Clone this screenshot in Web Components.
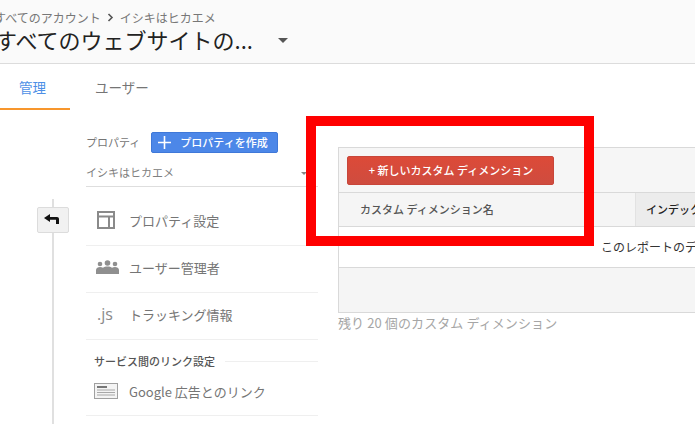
<!DOCTYPE html>
<html lang="ja"><head><meta charset="utf-8">
<style>
html,body{margin:0;padding:0;background:#fff;width:695px;height:424px;overflow:hidden;font-family:"Noto Sans CJK JP","Liberation Sans",sans-serif}
</style></head><body>
<ga-app></ga-app>
<script>
function def(name, html){
  customElements.define(name, class extends HTMLElement{
    constructor(){super();this.attachShadow({mode:'open'}).innerHTML=html;}
  });
}
const font='"Noto Sans CJK JP","Liberation Sans",sans-serif';
def('ga-header',`<style>
:host{display:block;height:63px;box-sizing:content-box;background:#fafafa;border-bottom:1px solid #dcdcdc;overflow:hidden;font-family:${font}}
.crumb{display:flex;align-items:center;gap:6px;margin:9px 0 0 -6px;height:17px;font-size:12px;line-height:17px;color:#777;white-space:nowrap}
.title{display:flex;align-items:center;margin:0 0 0 -5px;height:26px;font-size:22px;line-height:26px;color:#222;white-space:nowrap}
.caret{margin-left:25px;margin-top:2px;width:0;height:0;border:5px solid transparent;border-top:5px solid #555;border-bottom:0}
</style>
<div class="crumb"><span>すべてのアカウント</span><svg width="7" height="9" viewBox="0 0 7 9"><path d="M1.500 1l3.500 3.500L1.500 8" fill="none" stroke="#555" stroke-width="1.600"/></svg><span>イシキはヒカエメ</span></div>
<div class="title"><span>すべてのウェブサイトの...</span><i class="caret"></i></div>`);

def('ga-tabs',`<style>
:host{display:flex;height:46px;font-family:${font};font-size:13.5px}
.t{box-sizing:border-box;height:46px;line-height:46px;white-space:nowrap;color:#757575}
.a{width:70px;padding-left:19px;color:#4d8fe6;border-bottom:2px solid #f7962d}
.b{margin-left:25px}
</style><div class="t a">管理</div><div class="t b">ユーザー</div>`);

def('ga-rail',`<style>
:host{display:flex;justify-content:center;width:32px;flex:none;margin-left:37px;height:100%}
.line{width:2px;height:100%;background:#e0e0e0;display:flex;justify-content:center;box-sizing:border-box}
.btn{flex:none;box-sizing:border-box;width:32px;height:26px;margin-top:8px;background:#f1f1f1;border:1px solid #dcdcdc;border-radius:2px;display:flex;align-items:center;justify-content:center}
svg{display:block;margin:-2px 0 0 -3px}
</style><div class="line"><div class="btn"><svg width="15" height="10" viewBox="0 0 15 10"><path d="M6 0 0 4l6 4V5.700h6V10h3V5c0-1.200-.8-2-2-2H6z" fill="#111"/></svg></div></div>`);

def('ga-nav-item',`<style>
:host{display:flex;align-items:center;height:42px;padding-bottom:4px;box-sizing:content-box;border-bottom:1px solid #efefef;font-size:13px;color:#757575;white-space:nowrap}
.i{width:43px;flex:none;display:flex;align-items:center;padding-left:9px;box-sizing:border-box}
</style><div class="i"><slot name="icon"></slot></div><slot></slot>`);

def('ga-nav',`<style>
:host{display:block;width:232px;flex:none;margin-left:17px;font-family:${font}}
.top{display:flex;align-items:center;height:24px;margin-top:-1px;font-size:11px;color:#757575;white-space:nowrap}
.create{display:flex;align-items:center;margin-left:11px;box-sizing:border-box;width:127px;height:21px;background:#4c87e8;border:1px solid #3f78d8;border-radius:2px;color:#fff;font-size:11px;font-weight:500}
.create svg{margin:0 9px 0 6px}
.sel{position:relative;height:27px;line-height:27px;font-size:11px;color:#808080;border-bottom:1px solid #dedede;margin-top:5px}
.sel i{position:absolute;right:11px;top:13px;width:0;height:0;border:3px solid transparent;border-top:3px solid #888;border-bottom:0}
.items{margin-top:12px}
.group{display:flex;align-items:center;height:22px;margin:10px 0 0 8px;font-size:11px;font-weight:500;color:#555;white-space:nowrap;gap:10px}
.group::after{content:"";flex:1;height:1px;background:#efefef}
ga-nav-item.g{height:38px;padding-bottom:5px}
svg{display:block}
</style>
<div class="top"><span>プロパティ</span><div class="create"><svg width="13" height="13" viewBox="0 0 13 13"><path d="M5.700 0h1.600v5.700H13v1.600H7.300V13H5.700V7.300H0V5.700h5.700z" fill="#fff"/></svg><span>プロパティを作成</span></div></div>
<div class="sel">イシキはヒカエメ<i></i></div>
<div class="items">
<ga-nav-item><svg slot="icon" style="margin-left:2px" width="18" height="18" viewBox="0 0 18 18"><path d="M1 1h16v16H1z M1 5.500h16 M12 5.500V17" fill="none" stroke="#8a8a8a" stroke-width="2"/></svg>プロパティ設定</ga-nav-item>
<ga-nav-item><svg slot="icon" style="margin-left:1px" width="23" height="14" viewBox="0 0 23 14"><g fill="#8f8f8f"><circle cx="4" cy="4" r="2.300"/><circle cx="11.500" cy="3" r="2.800"/><circle cx="19" cy="4" r="2.300"/><path d="M0 14v-4c0-2 2-3 4-3 1.300 0 2.200.3 3 .8C8 6.800 9.700 6.500 11.500 6.500s3.500.3 4.500 1.300c.8-.5 1.700-.8 3-.8 2 0 4 1 4 3v4z"/></g></svg>ユーザー管理者</ga-nav-item>
<ga-nav-item><span slot="icon" style="font:16px 'Open Sans','Liberation Sans',sans-serif;color:#8a8a8a;margin-left:2px">.js</span>トラッキング情報</ga-nav-item>
</div>
<div class="group">サービス間のリンク設定</div>
<ga-nav-item class="g"><svg slot="icon" style="margin-left:-1px" width="24" height="16" viewBox="0 0 24 16"><rect x=".5" y=".5" width="23" height="15" fill="#f4f4f4" stroke="#a0a0a0"/><path d="M3 4h10" stroke="#777" stroke-width="2"/><path d="M3 7h18M3 9.500h18M3 12h18" stroke="#a8a8a8"/></svg><span style="font-family:Roboto,${font};letter-spacing:-.15px">Google 広告とのリンク</span></ga-nav-item>`);

def('ga-panel',`<style>
:host{display:block;width:400px;flex:none;margin-left:20px;font-family:${font}}
.box{border:1px solid #d9d9d9;border-right:0;margin-top:37px}
.tool{background:#f6f6f6;padding:8px;box-sizing:border-box;border-bottom:1px solid #d9d9d9;height:45px}
.add{box-sizing:border-box;width:207px;height:29px;padding-left:1px;background:linear-gradient(#dc4a38,#cf4c3f);border:1px solid #c8463a;border-radius:2px;color:#fff;font-size:11px;font-weight:500;text-align:center;line-height:26px;white-space:nowrap}
.head{display:flex;height:33px;background:#f5f5f5;border-bottom:1px solid #d9d9d9;font-size:11px;line-height:32px;white-space:nowrap}
.c1{width:297px;flex:none;padding-left:21px;box-sizing:border-box;color:#555;border-right:1px solid #e2e2e2;font-weight:500}
.c2{flex:1;background:#ececec;padding-left:10px;color:#222;font-weight:500}
.empty{height:40px;background:#fff;border-bottom:1px solid #d9d9d9;font-size:12px;line-height:39px;color:#333;padding-left:262px;white-space:nowrap;overflow:hidden}
.foot{height:44px;background:#f5f5f5}
.note{margin-top:1px;font-size:13px;line-height:18px;letter-spacing:.1px;color:#a6a6a6;white-space:nowrap}
</style>
<div class="box"><div class="tool"><div class="add">+ 新しいカスタム ディメンション</div></div>
<div class="head"><div class="c1">カスタム ディメンション名</div><div class="c2">インデックス</div></div>
<div class="empty">このレポートのデータはありません</div>
<div class="foot"></div></div>
<div class="note">残り 20 個のカスタム ディメンション</div>`);

def('ga-mark',`<style>
:host{position:absolute;left:306px;top:116px;width:288px;height:130px;box-sizing:border-box;border:10px solid #f00;pointer-events:none}
</style>`);

def('ga-app',`<style>
:host{display:block;position:relative;width:695px;height:424px;overflow:hidden;background:#fff}
main{display:flex;height:314px;overflow:hidden}
.rail{height:100%;padding-top:89px;box-sizing:border-box;flex:none}
.navw{padding-top:21px}
</style>
<ga-header></ga-header><ga-tabs></ga-tabs>
<main><div class="rail"><ga-rail></ga-rail></div><div class="navw"><ga-nav></ga-nav></div><ga-panel></ga-panel></main>
<ga-mark></ga-mark>`);
</script>
</body></html>
